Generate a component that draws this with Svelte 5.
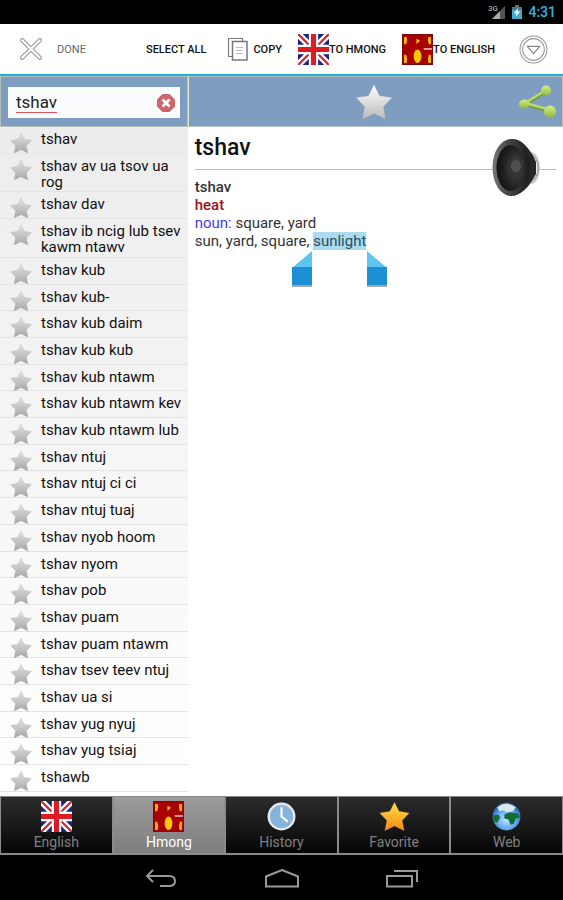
<script lang="ts">
  const words = [
    "tshav",
    "tshav av ua tsov ua rog",
    "tshav dav",
    "tshav ib ncig lub tsev kawm ntawv",
    "tshav kub",
    "tshav kub-",
    "tshav kub daim",
    "tshav kub kub",
    "tshav kub ntawm",
    "tshav kub ntawm kev",
    "tshav kub ntawm lub",
    "tshav ntuj",
    "tshav ntuj ci ci",
    "tshav ntuj tuaj",
    "tshav nyob hoom",
    "tshav nyom",
    "tshav pob",
    "tshav puam",
    "tshav puam ntawm",
    "tshav tsev teev ntuj",
    "tshav ua si",
    "tshav yug nyuj",
    "tshav yug tsiaj",
    "tshawb",
  ];

  const tabs = ["English", "Hmong", "History", "Favorite", "Web"];

  let query = $state("tshav");
  let active = $state("Hmong");
</script>

{#snippet star(cls: string, fill: string)}
  <svg class={cls} viewBox="0 0 24 24" aria-hidden="true">
    <path
      d="M12 1l3.600 7 7.900 1.200-5.500 5.800 1.500 8-7.500-3.600L4.500 23 6 15 .5 9.200 8.400 8z"
      {fill}
      stroke="#8886"
      stroke-width=".4"
      stroke-linejoin="round"
    />
  </svg>
{/snippet}

{#snippet ukFlag()}
  <svg class="flag" viewBox="0 0 30 30" aria-hidden="true">
    <rect width="30" height="30" fill="#20207e" />
    <path d="M0 0l30 30M30 0L0 30" stroke="#fff" stroke-width="6.500" />
    <path d="M0 0l30 30M30 0L0 30" stroke="#d8242c" stroke-width="2.200" />
    <path d="M15 0v30M0 15h30" stroke="#fff" stroke-width="9" />
    <path d="M15 0v30M0 15h30" stroke="#dc1c24" stroke-width="5" />
  </svg>
{/snippet}

{#snippet hmongFlag()}
  <svg class="flag" viewBox="0 0 30 30" aria-hidden="true">
    <rect width="30" height="30" fill="#a80000" />
    <g fill="#f6b80c">
      <path d="M2 3h2.500l.5 3-1 4H2zM28 3h-2.500l-.5 3 1 4h2zM2 20h2l1 4-.5 4H2zM28 20h-2l-1 4 .5 4H28z" />
      <path d="M14 4.500l3.500 2-3.500 3.500z" />
      <ellipse cx="15" cy="21.500" rx="3.700" ry="6.500" fill="#ffc800" />
    </g>
    <path d="M21 14.500h9" stroke="#f6c0c0" stroke-width="1.500" />
    <path d="M.5.500h29v29H.5z" fill="none" stroke="#7c0a0a" />
  </svg>
{/snippet}

<svg class="defs" aria-hidden="true">
  <defs>
    <linearGradient id="silver" x2="0" y2="1">
      <stop offset="0" stop-color="#e4e4e4" />
      <stop offset="1" stop-color="#a6a6a6" />
    </linearGradient>
    <linearGradient id="bright" x2="0" y2="1">
      <stop offset="0" stop-color="#fff" />
      <stop offset="1" stop-color="#bababa" />
    </linearGradient>
    <linearGradient id="gold" x2="0" y2="1">
      <stop offset="0" stop-color="#ffe04a" />
      <stop offset="1" stop-color="#f78a12" />
    </linearGradient>
    <linearGradient id="lime" x2="0" y2="1">
      <stop offset="0" stop-color="#d3ee86" />
      <stop offset="1" stop-color="#8dbb3c" />
    </linearGradient>
    <radialGradient id="cone" cx=".7" cy=".5" r=".7">
      <stop offset="0" stop-color="#4c4c4c" />
      <stop offset=".6" stop-color="#222" />
      <stop offset="1" stop-color="#111" />
    </radialGradient>
    <linearGradient id="rim">
      <stop offset="0" stop-color="#777" />
      <stop offset=".4" stop-color="#484848" />
      <stop offset="1" stop-color="#1c1c1c" />
    </linearGradient>
    <radialGradient id="sea" cx=".5" cy=".6" r=".6">
      <stop offset="0" stop-color="#c4e4ff" />
      <stop offset=".6" stop-color="#5ea8f0" />
      <stop offset="1" stop-color="#1c4fae" />
    </radialGradient>
  </defs>
</svg>

<div class="screen">
  <div class="status">
    <svg class="signal" viewBox="0 0 18 16" aria-label="3G signal">
      <path d="M17 2v13H4z" fill="#555" />
      <path d="M12 7v8H4z" fill="#aaa" />
      <text x="0" y="7">3G</text>
    </svg>
    <svg class="battery" viewBox="0 0 10 16" aria-label="Charging">
      <path d="M3 1h4v2h3v12H0V3h3z" fill="#47a9ce" />
      <path d="M3 1h4v2h3v3H0V3h3z" fill="#567582" />
      <path d="M6 4L2 9.500h2.500L4 13l4-5.500H5.500z" fill="#fff" />
    </svg>
    <time>4:31</time>
  </div>

  <div class="actionbar">
    <button class="done">
      <svg class="cross" viewBox="0 0 20 20" aria-hidden="true">
        <path d="M2 2l16 16M18 2L2 18" stroke="#999" stroke-width="4" stroke-linecap="round" />
        <path d="M2 2l16 16M18 2L2 18" stroke="#fff" stroke-width="2" stroke-linecap="round" />
      </svg>
      Done
    </button>
    <button class="select-all">Select all</button>
    <button class="copy">
      <svg viewBox="0 0 20 24" aria-hidden="true" fill="none" stroke="#777">
        <path d="M4.500 19.500h-4V1.500h14v3" stroke-width="1.200" />
        <path d="M4.500 4.500h14.500v18.500h-14.500z" fill="#fff" stroke-width="1.500" />
        <path d="M8 10.500h7M8 13.500h6M8 16.500h7" stroke="#bbb" />
      </svg>
      Copy
    </button>
    <button class="to-hmong">{@render ukFlag()}To Hmong</button>
    <button class="to-english">{@render hmongFlag()}To English</button>
    <button class="more" aria-label="More">
      <svg viewBox="0 0 28 28" fill="none" stroke="#999" aria-hidden="true">
        <circle cx="14" cy="14" r="13" />
        <circle cx="14" cy="14" r="10.500" />
        <path d="M8 11h12l-6 7z" stroke="#888" stroke-width="1.200" stroke-linejoin="round" />
      </svg>
    </button>
  </div>

  <main>
    <aside>
      <div class="toolbar search">
        <div class="field">
          <input type="text" aria-label="Search" spellcheck="false" bind:value={query} />
          <button class="clear" aria-label="Clear" onclick={() => (query = "")}>
            <svg viewBox="0 0 18 18" aria-hidden="true">
              <path d="M5.500 0h7L18 5.500v7L12.500 18h-7L0 12.500v-7z" fill="#cb666b" />
              <path d="M5.500 5.500l7 7M12.500 5.500l-7 7" stroke="#fff" stroke-width="2.800" />
            </svg>
          </button>
        </div>
      </div>
      <ul>
        {#each words as word}
          <li>
            <button class="word" onclick={() => (query = word)}>
              {@render star("small-star", "url(#silver)")}
              <span>{word}</span>
            </button>
          </li>
        {/each}
      </ul>
    </aside>

    <section>
      <div class="toolbar tools">
        <button class="favorite" aria-label="Add to favorites">
          {@render star("big-star", "url(#bright)")}
        </button>
        <button class="share" aria-label="Share">
          <svg viewBox="0 0 38 34" aria-hidden="true">
            <path d="M27 6L6 19l26 7" fill="none" stroke="#769c3b" stroke-width="4" />
            <path d="M27 5L6 18l26 7" fill="none" stroke="#b8d974" stroke-width="2.500" />
            <circle cx="27" cy="5.500" r="5" fill="url(#lime)" />
            <ellipse cx="5.500" cy="19" rx="5.500" ry="4.500" fill="url(#lime)" />
            <ellipse cx="31" cy="26.500" rx="6" ry="6" fill="url(#lime)" />
          </svg>
        </button>
      </div>
      <article>
        <h1>tshav</h1>
        <button class="speak" aria-label="Pronounce">
          <svg viewBox="0 0 50 60" aria-hidden="true">
            <ellipse cx="39" cy="30" rx="9" ry="16" fill="#c9c9c9" />
            <ellipse cx="40" cy="30" rx="6" ry="12" fill="#eee" stroke="#888" />
            <path d="M20 1c12 0 20 14 24 23v12c-5 9-12 20-23 22z" fill="#262626" />
            <ellipse cx="19" cy="29.500" rx="18.500" ry="28.500" fill="url(#rim)" />
            <ellipse cx="18.500" cy="30" rx="14" ry="23" fill="url(#cone)" />
            <ellipse cx="23" cy="30" rx="7.500" ry="10" fill="#333" />
            <ellipse cx="24" cy="28" rx="5" ry="6.500" fill="#505050" />
          </svg>
        </button>
        <p class="headword">tshav</p>
        <p class="sense">heat</p>
        <p><span class="pos">noun:</span> square, yard</p>
        <p>
          sun, yard, square, <mark>sunlight<svg class="handle start" viewBox="0 0 22 36" aria-hidden="true">
              <path d="M1 34.500h20v1.500H1z" fill="#aaa" />
              <path d="M21 0v17H1z" fill="#5cc5f0" />
              <path d="M1 16h20v18.500H1z" fill="#1c90d3" />
            </svg><svg class="handle end" viewBox="0 0 22 36" aria-hidden="true">
              <path d="M1 34.500h20v1.500H1z" fill="#aaa" />
              <path d="M1 0v17h20z" fill="#5cc5f0" />
              <path d="M1 16h20v18.500H1z" fill="#1c90d3" />
            </svg></mark>
        </p>
      </article>
    </section>
  </main>

  <nav class="tabs">
    {#each tabs as tab}
      <button class:active={active === tab} onclick={() => (active = tab)}>
        {#if tab === "English"}
          {@render ukFlag()}
        {:else if tab === "Hmong"}
          {@render hmongFlag()}
        {:else if tab === "History"}
          <svg class="flag" viewBox="0 0 30 30" aria-hidden="true">
            <circle cx="15" cy="15" r="13.500" fill="#e9eff3" />
            <circle cx="15" cy="15" r="11" fill="#85b4da" stroke="#a7bdcc" />
            <path d="M15 6v9l6 5" fill="none" stroke="#fff" stroke-width="2" />
          </svg>
        {:else if tab === "Favorite"}
          {@render star("flag", "url(#gold)")}
        {:else}
          <svg class="flag" viewBox="0 0 30 30" aria-hidden="true">
            <circle cx="15" cy="15" r="13.500" fill="url(#sea)" />
            <path d="M6 6q9-7 18 0l-3 4-5 1-4-2-4 1z" fill="#d9e9ee" />
            <path d="M2 14l5-1 2 3-3 5-3-1zM13 13l5-2 8 1 2 4-4 1-2 5-3 1-2-5-4-1z" fill="#126d34" />
          </svg>
        {/if}
        <span>{tab}</span>
      </button>
    {/each}
  </nav>

  <div class="system">
    <button aria-label="Back">
      <svg viewBox="0 0 36 20" aria-hidden="true">
        <path d="M9 1L3 7l6 6M3 7h22q6 0 6 5t-6 5H16" />
      </svg>
    </button>
    <button aria-label="Home">
      <svg viewBox="0 0 36 20" aria-hidden="true">
        <path d="M2 17.500V7.500L18 1l16 6.500v10z" />
      </svg>
    </button>
    <button aria-label="Recent apps">
      <svg viewBox="0 0 36 20" aria-hidden="true">
        <path d="M3 7h25v10.500H3zM10 2h23v11" />
      </svg>
    </button>
  </div>
</div>

<style>
  :global(body) {
    margin: 0;
  }
  .defs {
    position: absolute;
    width: 0;
    height: 0;
  }
  .screen {
    min-height: 100vh;
    display: flex;
    flex-direction: column;
    background: #fff;
    color: #111;
    font-family: Roboto, sans-serif;
    font-size: 15px;
  }
  button {
    display: flex;
    align-items: center;
    margin: 0;
    padding: 0;
    border: 0;
    background: none;
    color: inherit;
    font: inherit;
    cursor: pointer;
  }
  svg {
    display: block;
    flex: none;
  }

  .status {
    display: flex;
    align-items: center;
    justify-content: flex-end;
    gap: 6px;
    height: 24px;
    padding-right: 7px;
    background: #000;
    color: #33b5e5;
    font-size: 14px;
    font-weight: 500;
  }
  .signal {
    width: 18px;
    height: 16px;
  }
  .signal text {
    font-size: 8px;
    fill: #aaa;
  }
  .battery {
    width: 10px;
    height: 16px;
  }

  .actionbar {
    display: flex;
    align-items: center;
    height: 50px;
    padding: 0 15px 0 20px;
    border-bottom: 2px solid #1eb0dc;
    font-size: 11px;
    font-weight: 500;
    text-transform: uppercase;
  }
  .actionbar button {
    text-transform: inherit;
    white-space: nowrap;
  }
  .done {
    gap: 15px;
    color: #666;
    font-weight: 400;
  }
  .cross {
    width: 22px;
    height: 22px;
  }
  .actionbar .select-all {
    margin-left: auto;
  }
  .actionbar .copy {
    gap: 5px;
    margin-left: 22px;
  }
  .copy svg {
    width: 20px;
    height: 24px;
  }
  .actionbar .to-hmong,
  .actionbar .to-english {
    margin-left: 16px;
  }
  .flag {
    width: 31px;
    height: 31px;
  }
  .actionbar .more {
    margin-left: 24px;
  }
  .more svg {
    width: 29px;
    height: 29px;
  }

  main {
    flex: 1;
    display: flex;
  }
  aside {
    flex: 1;
    min-width: 0;
    display: flex;
    flex-direction: column;
    background: linear-gradient(#ebebeb, #fff);
  }
  section {
    flex: 2;
    min-width: 0;
  }
  .toolbar {
    box-sizing: border-box;
    height: 51px;
    display: flex;
    align-items: center;
    background: #7f9dc1;
    border: 1px solid #b4c4bd;
  }
  .search {
    padding: 2px 7px 0;
  }
  .field {
    flex: 1;
    min-width: 0;
    display: flex;
    align-items: center;
    height: 31px;
    padding: 0 5px 0 8px;
    background: #f9fbfc;
  }
  input {
    field-sizing: content;
    min-width: 8px;
    padding: 0;
    border: 0;
    border-bottom: 1px solid #e0525c;
    outline: 0;
    background: none;
    color: #222;
    font: inherit;
    font-size: 17px;
    line-height: 20px;
  }
  .clear {
    margin-left: auto;
  }
  .clear svg {
    width: 18px;
    height: 18px;
  }
  ul {
    flex: 1;
    display: flex;
    flex-direction: column;
    margin: 0;
    padding: 0 0 4px;
    list-style: none;
  }
  li {
    flex: 1 0 auto;
    box-sizing: border-box;
    min-height: 26px;
    border-bottom: 1px solid #e4e4e4;
  }
  .word {
    width: 100%;
    align-items: flex-start;
    gap: 9px;
    padding: 0 4px 0 10px;
    text-align: left;
    line-height: 16px;
  }
  .word span {
    padding-top: 4px;
  }
  .small-star {
    width: 22px;
    height: 22px;
    margin: 5px 0 -3px;
  }

  .tools {
    justify-content: space-between;
    padding: 0 5px 0 166px;
    border-left-color: #dfe6cc;
  }
  .big-star {
    width: 38px;
    height: 38px;
  }
  .share svg {
    width: 38px;
    height: 34px;
  }
  article {
    position: relative;
    padding: 7px 7px 0;
    line-height: 18px;
    color: #333;
  }
  h1 {
    margin: 0 0 8px;
    padding-bottom: 7px;
    border-bottom: 1px solid #bbb;
    color: #111;
    font-size: 23px;
    font-weight: 500;
    line-height: 28px;
  }
  .speak {
    position: absolute;
    top: 11px;
    right: 21px;
  }
  .speak svg {
    width: 50px;
    height: 60px;
  }
  p {
    margin: 0;
  }
  .headword {
    font-weight: 500;
  }
  .sense {
    color: #a01018;
    font-weight: 500;
  }
  .pos {
    color: #3c3ce8;
  }
  mark {
    position: relative;
    background: #a9dcf1;
    color: #2c4c5c;
  }
  .handle {
    position: absolute;
    top: 19px;
    width: 22px;
    height: 36px;
  }
  .start {
    right: 100%;
  }
  .end {
    left: 100%;
  }

  .tabs {
    display: flex;
    gap: 2px;
    padding: 1px 1px 2px;
    background: #8b8b8b;
  }
  .tabs button {
    flex: 1;
    flex-direction: column;
    box-sizing: border-box;
    height: 56px;
    padding-top: 4px;
    background: linear-gradient(#2b2b2b, #161616 60%, #050505);
    color: #808080;
    font-size: 14px;
    line-height: 20px;
  }
  .tabs button.active {
    background: linear-gradient(#9c9c9c, #7e7e7e);
    color: #fff;
  }
  .system {
    display: flex;
    justify-content: center;
    gap: 84px;
    box-sizing: border-box;
    height: 45px;
    padding-top: 3px;
    background: #000;
  }
  .system svg {
    width: 36px;
    height: 20px;
    fill: none;
    stroke: #999;
    stroke-width: 2;
  }
</style>
